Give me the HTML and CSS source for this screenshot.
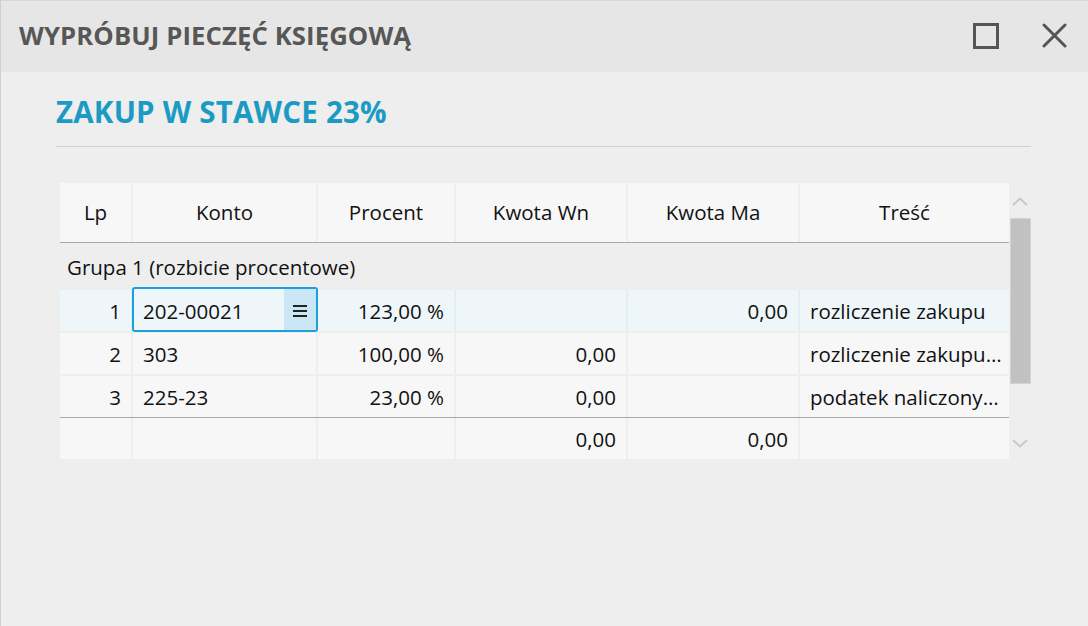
FILE: index.html
```html
<!doctype html>
<html>
	<head>
		<meta http-equiv="Content-Type" content="text/html;charset=UTF-8"/>
		<title>Wypróbuj pieczęć księgową</title>
		<link rel="stylesheet" href="styles.css">
	</head>
<body>
	<div class="okno">
		<!--pasek tytułu-->
		<div class="pasek">
			<span class="tytul">WYPRÓBUJ PIECZĘĆ KSIĘGOWĄ</span>
			<div class="przyciski">
				<svg class="ikona" width="26" height="26" viewBox="0 0 26 26"><rect x="1.5" y="1.5" width="23" height="23" fill="none" stroke="#555" stroke-width="3"/></svg>
				<svg class="ikona" width="25" height="25" viewBox="0 0 25 25"><path d="M2 2 L23 23 M23 2 L2 23" stroke="#555" stroke-width="3" stroke-linecap="round"/></svg>
			</div>
		</div>
		<div class="tresc">
			<h1 class="naglowek">ZAKUP W STAWCE 23%</h1>
			<div class="linia"></div>
			<div class="siatka">
				<div class="tabela">
					<div class="wiersz nag">
						<div>Lp</div><div>Konto</div><div>Procent</div><div>Kwota Wn</div><div>Kwota Ma</div><div>Treść</div>
					</div>
					<div class="kreska"></div>
					<div class="grupa">Grupa 1 (rozbicie procentowe)</div>
					<div class="wiersz aktywny">
						<div class="pr">1</div>
						<div class="edycja">
							<div class="pole">
								<span class="wartosc">202-00021</span>
								<span class="lista"><svg width="14" height="12" viewBox="0 0 14 12"><path d="M0 1 H14 M0 6 H14 M0 11 H14" stroke="#222" stroke-width="2"/></svg></span>
							</div>
						</div>
						<div class="pr">123,00 %</div><div class="pr"></div><div class="pr">0,00</div><div>rozliczenie zakupu</div>
					</div>
					<div class="wiersz">
						<div class="pr">2</div><div>303</div><div class="pr">100,00 %</div><div class="pr">0,00</div><div class="pr"></div><div>rozliczenie zakupu…</div>
					</div>
					<div class="wiersz">
						<div class="pr">3</div><div>225-23</div><div class="pr">23,00 %</div><div class="pr">0,00</div><div class="pr"></div><div>podatek naliczony…</div>
					</div>
					<div class="kreska"></div>
					<div class="wiersz suma">
						<div></div><div></div><div></div><div class="pr">0,00</div><div class="pr">0,00</div><div></div>
					</div>
				</div>
				<!--pasek przewijania-->
				<div class="suwak">
					<svg class="strzalka" width="16" height="9" viewBox="0 0 16 9"><path d="M1 8 L8 1.5 L15 8" fill="none" stroke="#c9c9c9" stroke-width="2"/></svg>
					<div class="uchwyt"></div>
					<svg class="strzalka dol" width="16" height="9" viewBox="0 0 16 9"><path d="M1 1 L8 7.5 L15 1" fill="none" stroke="#c9c9c9" stroke-width="2"/></svg>
				</div>
			</div>
		</div>
	</div>
</body>
</html>
```

FILE: styles.css
```css
*{margin:0;padding:0;box-sizing:border-box;}
body{background:#eee;font-family:"Open Sans","Noto Sans",sans-serif;color:#111;}
.okno{width:1088px;height:626px;border-top:1px solid #d6d6d6;border-left:1px solid #cfcfcf;background:#eee;overflow:hidden;}
.pasek{height:71px;background:#e6e6e6;display:flex;align-items:center;justify-content:space-between;padding:0 21px 2px 18px;}
.tytul{font-size:25.7px;font-weight:700;color:#575757;letter-spacing:0.1px;}
.przyciski{display:flex;align-items:center;gap:43px;}
.ikona{display:block;}
.tresc{padding:0 57px 0 55px;}
.naglowek{font-size:29.5px;font-weight:700;color:#1b9bc4;line-height:29px;margin-top:25px;letter-spacing:0.2px;}
.linia{height:1px;background:#d0d0d0;margin-top:20px;}
.siatka{display:flex;margin-top:36px;padding-left:4px;}
.tabela{width:949px;font-size:20.5px;}
.wiersz{display:grid;grid-template-columns:71px 183px 136px 170px 170px 209px;column-gap:2px;height:41px;margin-top:2px;}
.wiersz>div{background:#f7f7f7;padding:0 10px;display:flex;align-items:center;white-space:nowrap;overflow:hidden;}
.wiersz>div.pr{justify-content:flex-end;}
.wiersz>div:last-child{padding-right:0;}
.wiersz.nag{height:59px;margin-top:0;}
.wiersz.nag>div{justify-content:center;padding-bottom:1px;}
.wiersz.nag>div:last-child{padding-right:10px;}
.kreska{height:1px;background:#a8a8a8;}
.grupa{height:47px;display:flex;align-items:center;padding-left:7px;}
.wiersz.aktywny{margin-top:0;background:#e4eef2;}
.wiersz.aktywny>div{background:#eef6fa;}
.suma{margin-top:0;}
.wiersz>div.edycja{overflow:visible;position:relative;padding:0;}
.pole{position:absolute;left:-1px;right:-2px;top:-3px;bottom:-1px;border:2px solid #1ba0dc;border-radius:3px;display:flex;background:#eef6fa;}
.wartosc{flex:1;padding-left:9px;display:flex;align-items:center;padding-top:2px;}
.lista{width:32px;background:#cbe7f5;display:flex;align-items:center;justify-content:center;padding-top:2px;}
.lista svg{display:block;}
.suwak{width:21px;display:flex;flex-direction:column;align-items:center;padding-top:14px;}
.strzalka{display:block;}
.uchwyt{width:21px;height:166px;margin-top:12px;margin-left:1px;background:#c1c1c1;border:1px solid #d3d3d3;}
.strzalka.dol{margin-top:55px;}
```
